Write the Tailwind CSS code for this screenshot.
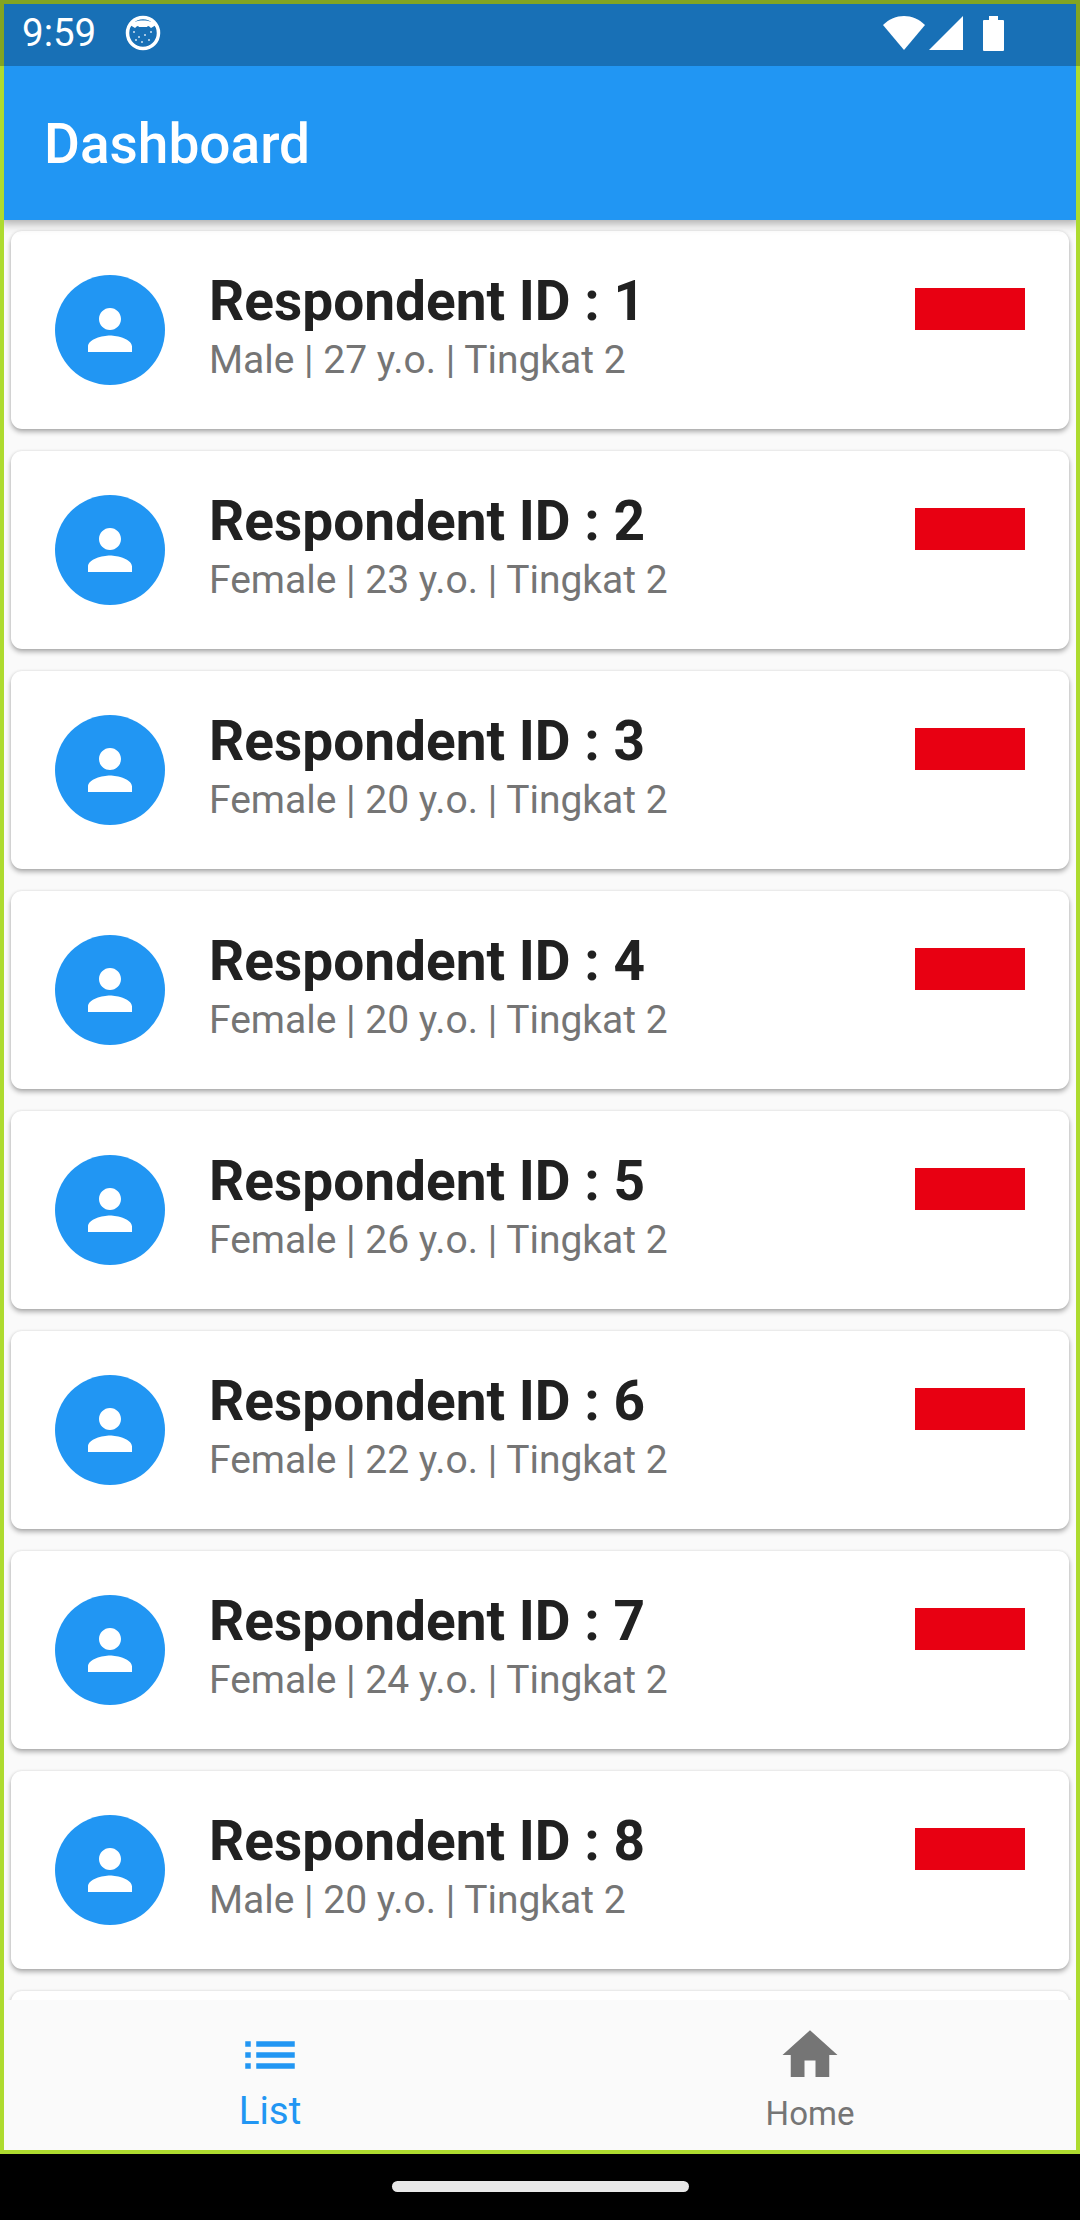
<!DOCTYPE html>
<html>
<head>
<meta charset="utf-8">
<script src="https://cdn.jsdelivr.net/npm/@tailwindcss/browser@4"></script>
</head>
<body class="m-0 bg-black">
<div class="relative w-[1080px] h-[2220px] bg-black overflow-hidden font-['Roboto',sans-serif]">
  <div class="relative h-[2154px] bg-[#fafafa] overflow-hidden flex flex-col">
    <header class="relative z-[5] h-[220px] shrink-0 bg-[#2196f3] pt-[68px] pl-[44px] flex items-center shadow-[0_3px_10px_rgba(0,0,0,0.35)]">
      <h1 class="text-[55px] leading-none font-medium text-white">Dashboard</h1>
    </header>

    <main class="flex-1 flex flex-col gap-[22px] px-[11px] pt-[11px] overflow-hidden">
      <article class="h-[198px] shrink-0 flex items-start rounded-[11px] bg-white shadow-[0_3px_5px_rgba(0,0,0,0.3),0_0_3px_rgba(0,0,0,0.1)] pl-[44px] pr-[44px] pt-[44px]">
        <div class="w-[110px] h-[110px] shrink-0 rounded-full bg-[#2196f3] flex items-center justify-center"><svg class="w-[66px] h-[66px]" viewBox="0 0 24 24" fill="#fff"><path d="M12 12c2.21 0 4-1.79 4-4s-1.79-4-4-4-4 1.79-4 4 1.79 4 4 4zm0 2c-2.67 0-8 1.34-8 4v2h16v-2c0-2.66-5.33-4-8-4z"/></svg></div>
        <div class="ml-[44px] flex-1 -mt-[6px]"><div class="text-[55px] leading-[64px] font-bold text-[#212121]">Respondent ID : 1</div><div class="text-[39px] leading-[45px] mt-[5px] text-[#757575]">Male | 27 y.o. | Tingkat 2</div></div>
        <div class="w-[110px] h-[42px] mt-[13px] bg-[#e80012]"></div>
      </article>
      <article class="h-[198px] shrink-0 flex items-start rounded-[11px] bg-white shadow-[0_3px_5px_rgba(0,0,0,0.3),0_0_3px_rgba(0,0,0,0.1)] pl-[44px] pr-[44px] pt-[44px]">
        <div class="w-[110px] h-[110px] shrink-0 rounded-full bg-[#2196f3] flex items-center justify-center"><svg class="w-[66px] h-[66px]" viewBox="0 0 24 24" fill="#fff"><path d="M12 12c2.21 0 4-1.79 4-4s-1.79-4-4-4-4 1.79-4 4 1.79 4 4 4zm0 2c-2.67 0-8 1.34-8 4v2h16v-2c0-2.66-5.33-4-8-4z"/></svg></div>
        <div class="ml-[44px] flex-1 -mt-[6px]"><div class="text-[55px] leading-[64px] font-bold text-[#212121]">Respondent ID : 2</div><div class="text-[39px] leading-[45px] mt-[5px] text-[#757575]">Female | 23 y.o. | Tingkat 2</div></div>
        <div class="w-[110px] h-[42px] mt-[13px] bg-[#e80012]"></div>
      </article>
      <article class="h-[198px] shrink-0 flex items-start rounded-[11px] bg-white shadow-[0_3px_5px_rgba(0,0,0,0.3),0_0_3px_rgba(0,0,0,0.1)] pl-[44px] pr-[44px] pt-[44px]">
        <div class="w-[110px] h-[110px] shrink-0 rounded-full bg-[#2196f3] flex items-center justify-center"><svg class="w-[66px] h-[66px]" viewBox="0 0 24 24" fill="#fff"><path d="M12 12c2.21 0 4-1.79 4-4s-1.79-4-4-4-4 1.79-4 4 1.79 4 4 4zm0 2c-2.67 0-8 1.34-8 4v2h16v-2c0-2.66-5.33-4-8-4z"/></svg></div>
        <div class="ml-[44px] flex-1 -mt-[6px]"><div class="text-[55px] leading-[64px] font-bold text-[#212121]">Respondent ID : 3</div><div class="text-[39px] leading-[45px] mt-[5px] text-[#757575]">Female | 20 y.o. | Tingkat 2</div></div>
        <div class="w-[110px] h-[42px] mt-[13px] bg-[#e80012]"></div>
      </article>
      <article class="h-[198px] shrink-0 flex items-start rounded-[11px] bg-white shadow-[0_3px_5px_rgba(0,0,0,0.3),0_0_3px_rgba(0,0,0,0.1)] pl-[44px] pr-[44px] pt-[44px]">
        <div class="w-[110px] h-[110px] shrink-0 rounded-full bg-[#2196f3] flex items-center justify-center"><svg class="w-[66px] h-[66px]" viewBox="0 0 24 24" fill="#fff"><path d="M12 12c2.21 0 4-1.79 4-4s-1.79-4-4-4-4 1.79-4 4 1.79 4 4 4zm0 2c-2.67 0-8 1.34-8 4v2h16v-2c0-2.66-5.33-4-8-4z"/></svg></div>
        <div class="ml-[44px] flex-1 -mt-[6px]"><div class="text-[55px] leading-[64px] font-bold text-[#212121]">Respondent ID : 4</div><div class="text-[39px] leading-[45px] mt-[5px] text-[#757575]">Female | 20 y.o. | Tingkat 2</div></div>
        <div class="w-[110px] h-[42px] mt-[13px] bg-[#e80012]"></div>
      </article>
      <article class="h-[198px] shrink-0 flex items-start rounded-[11px] bg-white shadow-[0_3px_5px_rgba(0,0,0,0.3),0_0_3px_rgba(0,0,0,0.1)] pl-[44px] pr-[44px] pt-[44px]">
        <div class="w-[110px] h-[110px] shrink-0 rounded-full bg-[#2196f3] flex items-center justify-center"><svg class="w-[66px] h-[66px]" viewBox="0 0 24 24" fill="#fff"><path d="M12 12c2.21 0 4-1.79 4-4s-1.79-4-4-4-4 1.79-4 4 1.79 4 4 4zm0 2c-2.67 0-8 1.34-8 4v2h16v-2c0-2.66-5.33-4-8-4z"/></svg></div>
        <div class="ml-[44px] flex-1 -mt-[6px]"><div class="text-[55px] leading-[64px] font-bold text-[#212121]">Respondent ID : 5</div><div class="text-[39px] leading-[45px] mt-[5px] text-[#757575]">Female | 26 y.o. | Tingkat 2</div></div>
        <div class="w-[110px] h-[42px] mt-[13px] bg-[#e80012]"></div>
      </article>
      <article class="h-[198px] shrink-0 flex items-start rounded-[11px] bg-white shadow-[0_3px_5px_rgba(0,0,0,0.3),0_0_3px_rgba(0,0,0,0.1)] pl-[44px] pr-[44px] pt-[44px]">
        <div class="w-[110px] h-[110px] shrink-0 rounded-full bg-[#2196f3] flex items-center justify-center"><svg class="w-[66px] h-[66px]" viewBox="0 0 24 24" fill="#fff"><path d="M12 12c2.21 0 4-1.79 4-4s-1.79-4-4-4-4 1.79-4 4 1.79 4 4 4zm0 2c-2.67 0-8 1.34-8 4v2h16v-2c0-2.66-5.33-4-8-4z"/></svg></div>
        <div class="ml-[44px] flex-1 -mt-[6px]"><div class="text-[55px] leading-[64px] font-bold text-[#212121]">Respondent ID : 6</div><div class="text-[39px] leading-[45px] mt-[5px] text-[#757575]">Female | 22 y.o. | Tingkat 2</div></div>
        <div class="w-[110px] h-[42px] mt-[13px] bg-[#e80012]"></div>
      </article>
      <article class="h-[198px] shrink-0 flex items-start rounded-[11px] bg-white shadow-[0_3px_5px_rgba(0,0,0,0.3),0_0_3px_rgba(0,0,0,0.1)] pl-[44px] pr-[44px] pt-[44px]">
        <div class="w-[110px] h-[110px] shrink-0 rounded-full bg-[#2196f3] flex items-center justify-center"><svg class="w-[66px] h-[66px]" viewBox="0 0 24 24" fill="#fff"><path d="M12 12c2.21 0 4-1.79 4-4s-1.79-4-4-4-4 1.79-4 4 1.79 4 4 4zm0 2c-2.67 0-8 1.34-8 4v2h16v-2c0-2.66-5.33-4-8-4z"/></svg></div>
        <div class="ml-[44px] flex-1 -mt-[6px]"><div class="text-[55px] leading-[64px] font-bold text-[#212121]">Respondent ID : 7</div><div class="text-[39px] leading-[45px] mt-[5px] text-[#757575]">Female | 24 y.o. | Tingkat 2</div></div>
        <div class="w-[110px] h-[42px] mt-[13px] bg-[#e80012]"></div>
      </article>
      <article class="h-[198px] shrink-0 flex items-start rounded-[11px] bg-white shadow-[0_3px_5px_rgba(0,0,0,0.3),0_0_3px_rgba(0,0,0,0.1)] pl-[44px] pr-[44px] pt-[44px]">
        <div class="w-[110px] h-[110px] shrink-0 rounded-full bg-[#2196f3] flex items-center justify-center"><svg class="w-[66px] h-[66px]" viewBox="0 0 24 24" fill="#fff"><path d="M12 12c2.21 0 4-1.79 4-4s-1.79-4-4-4-4 1.79-4 4 1.79 4 4 4zm0 2c-2.67 0-8 1.34-8 4v2h16v-2c0-2.66-5.33-4-8-4z"/></svg></div>
        <div class="ml-[44px] flex-1 -mt-[6px]"><div class="text-[55px] leading-[64px] font-bold text-[#212121]">Respondent ID : 8</div><div class="text-[39px] leading-[45px] mt-[5px] text-[#757575]">Male | 20 y.o. | Tingkat 2</div></div>
        <div class="w-[110px] h-[42px] mt-[13px] bg-[#e80012]"></div>
      </article>
      <article class="h-[198px] shrink-0 rounded-[11px] bg-white shadow-[0_3px_5px_rgba(0,0,0,0.3),0_0_3px_rgba(0,0,0,0.1)]"></article>
    </main>

    <nav class="relative z-[5] h-[154px] shrink-0 bg-[#fafafa] grid grid-cols-2">
      <div class="flex flex-col items-center">
        <svg class="w-[66px] h-[66px] mt-[22px]" viewBox="0 0 24 24" fill="#2196f3"><path d="M3 13h2v-2H3v2zm0 4h2v-2H3v2zm0-8h2V7H3v2zm4 4h14v-2H7v2zm0 4h14v-2H7v2zM7 7v2h14V7H7z"/></svg>
        <span class="text-[38.5px] leading-[45px] text-[#2196f3]">List</span>
      </div>
      <div class="flex flex-col items-center">
        <svg class="w-[66px] h-[66px] mt-[22px]" viewBox="0 0 24 24" fill="#757575"><path d="M10 20v-6h4v6h5v-8h3L12 3 2 12h3v8z"/></svg>
        <span class="text-[33px] leading-[38px] mt-[7px] text-[#757575]">Home</span>
      </div>
    </nav>

    <div class="absolute inset-0 z-10 border-[4px] border-[#aedb2f] pointer-events-none"></div>
    <div class="absolute top-0 inset-x-0 z-20 h-[66px] bg-black/25 flex items-center pl-[22px] pr-[76px] text-white">
      <span class="text-[38.5px] leading-none">9:59</span>
      <svg class="ml-[29px] w-[36px] h-[36px]" viewBox="0 0 36 36"><circle cx="18" cy="18" r="15.5" fill="none" stroke="#fff" stroke-width="3.5"/><path d="M5 10C8 4 28 4 31 10L26 13C24 11 23 10 22 12H14C13 10 12 11 10 13Z" fill="#fff"/><g fill="#fff" opacity=".8"><circle cx="9" cy="17" r="1"/><circle cx="14" cy="22" r="1"/><circle cx="20" cy="20" r="1"/><circle cx="26" cy="17" r="1"/><circle cx="17" cy="27" r="1"/><circle cx="24" cy="25" r="1"/><circle cx="11" cy="25" r="1"/></g></svg>
      <div class="ml-auto flex items-center">
        <svg class="w-[42px] h-[36px]" viewBox="0 0 42 36" fill="#fff"><path d="M0 10C12 -2 30 -2 42 10L21 35Z"/></svg>
        <svg class="ml-[4px] w-[34px] h-[34px]" viewBox="0 0 34 34" fill="#fff"><path d="M34 0V34H0Z"/></svg>
        <svg class="ml-[20px] w-[21px] h-[35px]" viewBox="0 0 21 35" fill="#fff"><path d="M6 0H15V4H20Q21 4 21 5V34Q21 35 20 35H1Q0 35 0 34V5Q0 4 1 4H6Z"/></svg>
      </div>
    </div>
  </div>
  <div class="h-[66px] flex items-center justify-center"><div class="w-[297px] h-[11px] -mt-[1px] rounded-full bg-[#e8e8e8]"></div></div>
</div>
</body>
</html>
